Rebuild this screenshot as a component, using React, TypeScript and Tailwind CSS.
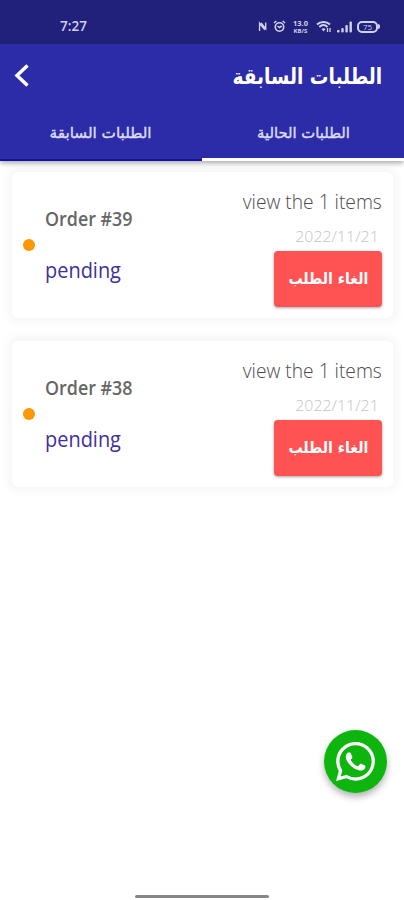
import React from "react";

const arabic = "font-['DejaVu_Sans',sans-serif]";
const latin = "font-['Open_Sans','Noto_Sans',sans-serif]";

function StatusIcons() {
  return (
    <div className="flex h-[14px] items-center text-[#d0d1ee]">
      <svg width="9" height="11" viewBox="0 0 9 12" fill="none" stroke="currentColor" strokeWidth="1.5">
        <path d="M1.300 11V2.500L7 9.500M3 2L8 8.500V1.500" />
      </svg>
      <svg className="ml-[6px]" width="13" height="13" viewBox="0 0 13 13" fill="none" stroke="currentColor" strokeWidth="1.6">
        <circle cx="6.5" cy="7" r="4.200" />
        <path d="M1 3L3.400 1M12 3L9.600 1M4.600 6L6.500 7.600L8.600 6" />
      </svg>
      <div className={`ml-[6px] flex w-[17px] flex-col items-center font-bold ${latin}`}>
        <span className="text-[7.5px] leading-[8px]">13.0</span>
        <span className="text-[6px] leading-[8px]">KB/S</span>
      </div>
      <svg className="ml-[7px]" width="16" height="13" viewBox="0 0 16 13" fill="none" stroke="currentColor" strokeWidth="2">
        <path d="M1 4.500C4.500 1 10.500 1 14 4.500M3.300 7C6 4.500 9 4.500 11.500 7" />
        <path d="M5.500 9L7.500 11.500L9.500 9Q7.500 7.400 5.500 9Z" fill="currentColor" stroke="none" />
        <path d="M11.500 8V12M14 8V12" strokeWidth="1.300" />
      </svg>
      <svg className="ml-[5px]" width="16" height="12" viewBox="0 0 16 12" fill="currentColor">
        <rect x="0" y="9" width="2.600" height="2.500" rx="1" />
        <rect x="4.300" y="7" width="2.400" height="4.500" rx="1" />
        <rect x="8.400" y="4" width="2.400" height="7.500" rx="1" />
        <rect x="12.500" y="0.500" width="2.400" height="11" rx="1" />
      </svg>
      <div className="ml-[4px] flex h-[12px] w-[21px] items-center justify-center rounded-[5px] border-2 border-current">
        <span className={`text-[8px] leading-none ${latin}`}>75</span>
      </div>
      <div className="h-[5px] w-[2px] rounded-r bg-current" />
    </div>
  );
}

function OrderCard({ id }: { id: number }) {
  return (
    <article className="flex h-[146px] justify-between rounded-[6px] bg-white pr-[11px] pl-[11px] shadow-[0_0_8px_5px_rgba(0,0,0,0.035)]">
      <div className="flex">
        <span className="mt-[67px] h-[12px] w-[12px] rounded-full bg-[#fb9804]" />
        <div className={`ml-[10px] flex flex-col items-start whitespace-nowrap ${latin}`}>
          <h2 className="mt-[33px] origin-left scale-x-[0.94] text-[19px] leading-[28px] font-semibold text-[#666]">
            Order #{id}
          </h2>
          <p className="mt-[22px] origin-left scale-x-[0.95] text-[21px] leading-[30px] text-[#40309c]">pending</p>
        </div>
      </div>
      <div className={`flex flex-col items-end whitespace-nowrap ${latin}`}>
        <p className="mt-[15px] origin-right scale-x-[0.96] text-[20px] leading-[30px] font-light text-[#4c4c4c]">
          view the 1 items
        </p>
        <p className="mt-[8px] mr-[3px] origin-right scale-x-[1.06] text-[15px] leading-[22px] font-light text-[#c4c4c4]">
          2022/11/21
        </p>
        <button
          dir="rtl"
          className={`mt-[4px] flex h-[56px] w-[108px] items-center justify-center rounded-[4px] bg-[#ff5252] text-white shadow-[0_1px_3px_rgba(0,0,0,0.35)] ${arabic}`}
        >
          <span className="scale-x-[0.88] text-[16px] font-bold">الغاء الطلب</span>
        </button>
      </div>
    </article>
  );
}

export default function App() {
  return (
    <main className="flex h-[900px] w-[404px] flex-col overflow-hidden bg-white">
      <div className="flex h-[44px] shrink-0 items-center justify-between bg-[#21217b] pt-[9px] pr-[24px] pl-[60px]">
        <span className={`text-[13.5px] font-semibold text-[#d0d1ee] ${latin}`}>7:27</span>
        <StatusIcons />
      </div>
      <header className="z-10 flex h-[117px] shrink-0 flex-col bg-[#2c2ca8] shadow-[0_2px_5px_rgba(0,0,0,0.35)]">
        <div className="flex h-[64px] items-center justify-between pr-[22px] pl-[14px]">
          <svg width="16" height="24" viewBox="0 0 16 24" fill="none" stroke="white" strokeWidth="3.500">
            <path d="M13.500 1.500L3 11.500L13.500 21.500" />
          </svg>
          <h1
            dir="rtl"
            className={`origin-right scale-x-[0.845] text-[22px] font-bold whitespace-nowrap text-white ${arabic}`}
          >
            الطلبات السابقة
          </h1>
        </div>
        <nav className={`flex h-[53px] text-[14.5px] text-[#dcdcf5] ${arabic}`}>
          <div dir="rtl" className="flex w-[202px] items-center justify-center border-b-2 border-[#1512a0]">
            <span className="scale-x-[1.05] [-webkit-text-stroke:0.4px_#dcdcf5]">الطلبات السابقة</span>
          </div>
          <div dir="rtl" className="flex w-[202px] items-center justify-center border-b-[3px] border-white pt-[1px]">
            <span className="scale-x-[1.02] [-webkit-text-stroke:0.4px_#dcdcf5]">الطلبات الحالية</span>
          </div>
        </nav>
      </header>
      <section className="flex flex-col gap-[23px] pt-[11px] pr-[11px] pl-[12px]">
        <OrderCard id={39} />
        <OrderCard id={38} />
      </section>
      <div className="mt-auto mr-[17px] flex h-[63px] w-[63px] items-center justify-center self-end rounded-full bg-[#0fb50f] shadow-[0_4px_7px_rgba(0,0,0,0.3)]">
        <svg width="39" height="39" viewBox="0 0 24 24" fill="white">
          <path d="M17.472 14.382c-.297-.149-1.758-.867-2.030-.967-.273-.099-.471-.148-.670.150-.197.297-.767.966-.940 1.164-.173.199-.347.223-.644.075-.297-.150-1.255-.463-2.390-1.475-.883-.788-1.480-1.761-1.653-2.059-.173-.297-.018-.458.130-.606.134-.133.298-.347.446-.520.149-.174.198-.298.298-.497.099-.198.050-.371-.025-.520-.075-.149-.669-1.612-.916-2.207-.242-.579-.487-.500-.669-.510-.173-.008-.371-.010-.570-.010-.198 0-.520.074-.792.372-.272.297-1.040 1.016-1.040 2.479 0 1.462 1.065 2.875 1.213 3.074.149.198 2.096 3.200 5.077 4.487.709.306 1.262.489 1.694.625.712.227 1.360.195 1.871.118.571-.085 1.758-.719 2.006-1.413.248-.694.248-1.289.173-1.413-.074-.124-.272-.198-.570-.347m-5.421 7.403h-.004a9.870 9.870 0 01-5.031-1.378l-.361-.214-3.741.982.998-3.648-.235-.374a9.860 9.860 0 01-1.510-5.260c.001-5.450 4.436-9.884 9.888-9.884 2.640 0 5.122 1.030 6.988 2.898a9.825 9.825 0 012.893 6.994c-.003 5.450-4.437 9.884-9.885 9.884m8.413-18.297A11.815 11.815 0 0012.050 0C5.495 0 .160 5.335.157 11.892c0 2.096.547 4.142 1.588 5.945L.057 24l6.305-1.654a11.882 11.882 0 005.683 1.448h.005c6.554 0 11.890-5.335 11.893-11.893a11.821 11.821 0 00-3.480-8.413z" />
        </svg>
      </div>
      <div className="mt-[102px] mb-[2px] h-[3px] w-[134px] shrink-0 self-center rounded-full bg-[#858786]" />
    </main>
  );
}
